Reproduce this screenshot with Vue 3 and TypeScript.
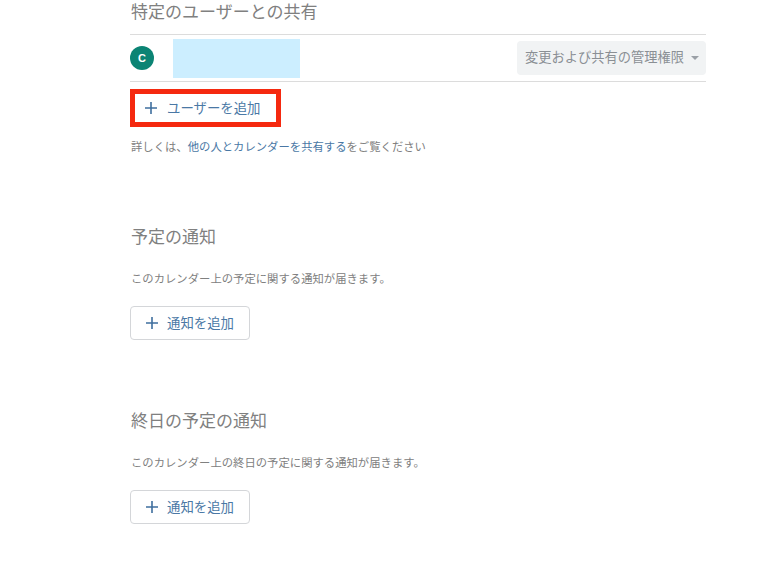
<script setup lang="ts">
const sections = [
  { title: '予定の通知', desc: 'このカレンダー上の予定に関する通知が届きます。' },
  { title: '終日の予定の通知', desc: 'このカレンダー上の終日の予定に関する通知が届きます。' },
]
</script>

<template>
  <main class="page">
    <h2 class="title first">特定のユーザーとの共有</h2>
    <div class="row">
      <span class="avatar">C</span>
      <span class="mask"></span>
      <span class="select">変更および共有の管理権限<i class="caret"></i></span>
    </div>
    <button class="add add-user">
      <svg class="plus" width="14" height="14" viewBox="0 0 14 14"><path d="M7 1v12M1 7h12" stroke="#3f6f9e" stroke-width="1.6" fill="none" /></svg>
      <span class="label">ユーザーを追加</span>
    </button>
    <p class="desc help">詳しくは、<a class="link">他の人とカレンダーを共有する</a>をご覧ください</p>
    <section v-for="s in sections" :key="s.title" class="section">
      <h2 class="title">{{ s.title }}</h2>
      <p class="desc">{{ s.desc }}</p>
      <button class="add outlined">
        <svg class="plus" width="14" height="14" viewBox="0 0 14 14"><path d="M7 1v12M1 7h12" stroke="#3f6f9e" stroke-width="1.6" fill="none" /></svg>
        <span class="label">通知を追加</span>
      </button>
    </section>
  </main>
</template>

<style>
html, body { background: #fff; }
</style>

<style scoped>
.page {
  width: 576px;
  margin-left: 130px;
  height: 576px;
  overflow: hidden;
  font-family: "Noto Sans CJK JP", "Liberation Sans", sans-serif;
  color: #808080;
}
.title {
  margin: 0;
  font-size: 17px;
  line-height: 24px;
  font-weight: 400;
  color: #808080;
  padding-left: 1px;
}
.first { line-height: 22px; height: 34px; }
.row {
  display: flex;
  align-items: center;
  height: 46px;
  border-top: 1px solid #dcdcdc;
  border-bottom: 1px solid #dcdcdc;
}
.avatar {
  width: 24px;
  height: 24px;
  border-radius: 50%;
  background: #0b8474;
  color: #fff;
  font: 700 11px "Liberation Sans", sans-serif;
  display: flex;
  align-items: center;
  justify-content: center;
}
.mask {
  width: 127px;
  height: 39px;
  margin-left: 19px;
  background: #cceeff;
}
.select {
  margin-left: auto;
  width: 189px;
  height: 34px;
  box-sizing: border-box;
  padding: 0 0 3px 8px;
  background: #f1f3f4;
  border-radius: 4px;
  font-size: 13.25px;
  color: #8a8f94;
  display: flex;
  align-items: center;
}
.caret {
  margin-left: 7px;
  margin-top: 3px;
  border-left: 4px solid transparent;
  border-right: 4px solid transparent;
  border-top: 4px solid #9aa0a6;
}
.add {
  display: flex;
  align-items: center;
  gap: 8px;
  background: #fff;
  font-family: inherit;
  font-size: 13.4px;
  color: #4a78a5;
  box-sizing: border-box;
  padding: 0 0 0 14px;
}
.label { position: relative; top: -1px; }
.add-user {
  width: 151px;
  height: 38px;
  margin-top: 7px;
  border: 5px solid #f5290f;
  padding-left: 9px;
}
.add-user .label { left: 1px; }
.outlined {
  width: 120px;
  height: 34px;
  border: 1px solid #d4d6d9;
  border-radius: 4px;
  margin-top: 20px;
}
.desc {
  margin: 0;
  font-size: 11.35px;
  line-height: 16px;
  color: #808080;
  padding-left: 1px;
}
.help { margin-top: 11px; }
.link { color: #4a78a5; }
.section { margin-top: 70px; }
.section + .section { margin-top: 68px; }
.section .desc { margin-top: 22px; }
</style>
